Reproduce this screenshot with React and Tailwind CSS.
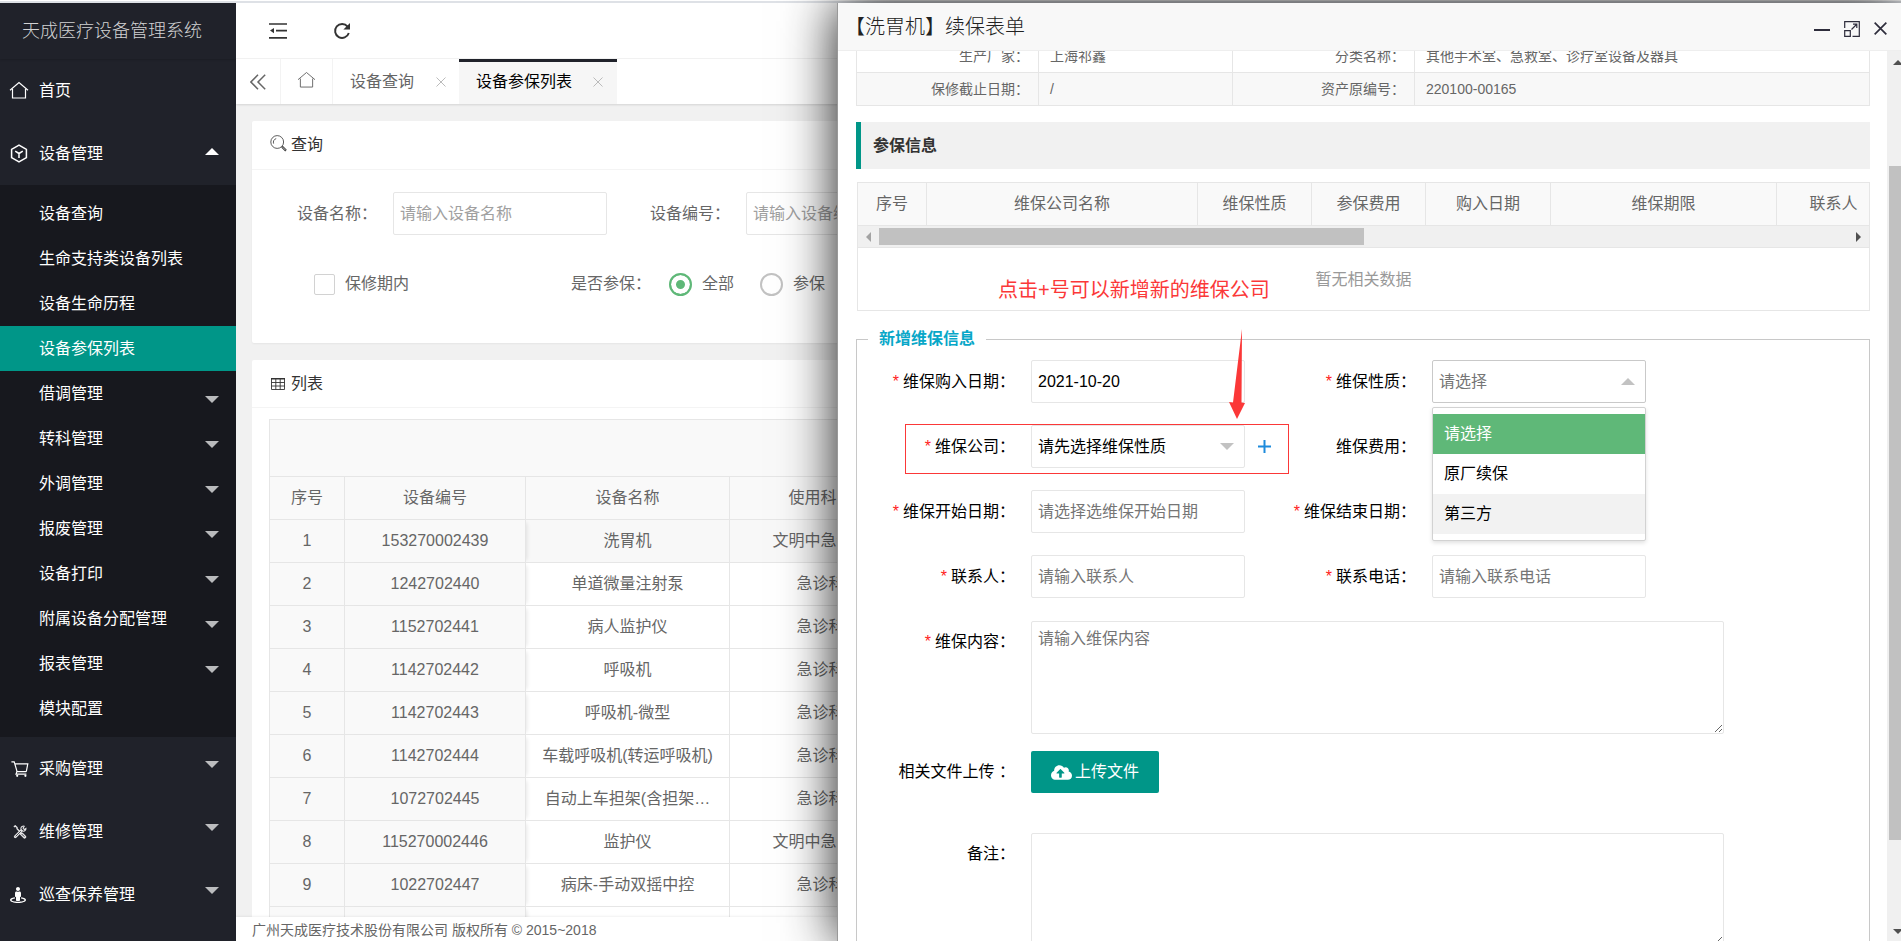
import React from "react";
import { FaStreetView, FaCloudUploadAlt } from "react-icons/fa";

/* ---------- icons ---------- */

function HomeIcon({ className, width = 1 }) {
  return (
    <svg className={className} viewBox="0 0 20 18" fill="none" stroke="currentColor" strokeWidth={width} aria-hidden="true">
      <path d="M1 9.2 10 1.6 19 9.2" />
      <path d="M3.5 8v9h13V8" />
    </svg>
  );
}

function CubeIcon({ className }) {
  return (
    <svg className={className} viewBox="0 0 18 20" fill="none" stroke="currentColor" strokeWidth="1.6" aria-hidden="true">
      <path d="M9 1.2 16.8 5.6v8.8L9 18.8 1.2 14.4V5.6Z" strokeLinejoin="round" />
      <path d="M5 7.6 9 10l4-2.4M9 10v4.8" />
    </svg>
  );
}

function CartIcon({ className }) {
  return (
    <svg className={className} viewBox="0 0 18 16" fill="none" stroke="currentColor" strokeWidth="1.2" aria-hidden="true">
      <path d="M.4.8h2.8l2.9 9.8h9.2M4.2 2.8h12.6l-1.5 7.8M5.9 10.6 5 13.2h10.4" />
      <circle cx="6.2" cy="14.8" r="1.1" fill="currentColor" stroke="none" />
      <circle cx="14.4" cy="14.8" r="1.1" fill="currentColor" stroke="none" />
    </svg>
  );
}

function ToolsIcon({ className }) {
  return (
    <svg className={className} viewBox="0 0 16 16" fill="none" stroke="currentColor" aria-hidden="true">
      <path d="M1 2.2 2.6 1l2 1.8v1.4l4 4" strokeWidth="1.6" />
      <path d="m9.8 10.2 3.4 3.4" strokeWidth="3.8" strokeLinecap="round" />
      <path d="m10 10.4 3 3" stroke="#20222a" strokeWidth="1" />
      <path d="M2.6 13.4 9.4 6.6" strokeWidth="3.2" strokeLinecap="round" />
      <path d="M3 13 9 7" stroke="#20222a" strokeWidth=".9" />
      <path d="M12.8 1.4a2.9 2.9 0 1 0 2 2.6l-1.9 1.2-1.4-1.5Z" strokeWidth="1.2" />
    </svg>
  );
}

function Caret({ up, className }) {
  return (
    <svg className={className} viewBox="0 0 14 7" fill="currentColor" aria-hidden="true">
      <path d={up ? "M0 7 7 0l7 7Z" : "M0 0h14L7 7Z"} />
    </svg>
  );
}

function ShrinkIcon({ className }) {
  return (
    <svg className={className} viewBox="0 0 18 16" aria-hidden="true">
      <path d="M0 1h18M7 7.6h11M0 14.8h18" stroke="currentColor" strokeWidth="1.7" />
      <path d="M5 5v5.2L1 7.6Z" fill="currentColor" />
    </svg>
  );
}

function RefreshIcon({ className }) {
  return (
    <svg className={className} viewBox="0 0 18 18" aria-hidden="true">
      <path d="M14.6 4.6A7 7 0 1 0 15.8 11" fill="none" stroke="currentColor" strokeWidth="1.9" />
      <path d="M17 1v6.6h-6.6Z" fill="currentColor" />
    </svg>
  );
}

function DoubleLeftIcon({ className }) {
  return (
    <svg className={className} viewBox="0 0 16 16" fill="none" stroke="currentColor" strokeWidth="1.5" aria-hidden="true">
      <path d="M8 .8.9 8 8 15.2M15.2.8 8 8l7.2 7.2" />
    </svg>
  );
}

function CrossIcon({ className, width = 1 }) {
  return (
    <svg className={className} viewBox="0 0 10 10" fill="none" stroke="currentColor" strokeWidth={width} aria-hidden="true">
      <path d="m.5.5 9 9m0-9-9 9" />
    </svg>
  );
}

function SearchIcon({ className }) {
  return (
    <svg className={className} viewBox="0 0 17 17" fill="none" stroke="currentColor" aria-hidden="true">
      <circle cx="7.2" cy="7" r="6.4" strokeWidth=".8" />
      <path d="M3.6 8.6a3.8 3.8 0 0 1 2.6-5" strokeWidth=".8" />
      <path d="m12 11.6 4 4" strokeWidth="2.2" />
      <path d="m12.6 12.2 3 3" stroke="#fff" strokeWidth=".7" />
    </svg>
  );
}

function GridIcon({ className }) {
  return (
    <svg className={className} viewBox="0 0 14 12" fill="none" stroke="currentColor" aria-hidden="true">
      <path d="M.5.5h13v11H.5ZM.5 4.5h13M.5 8h13M4.8.5v11M9.2.5v11" strokeWidth=".9" />
      <path d="M0 .8h14" strokeWidth="1.4" />
    </svg>
  );
}

function MaximizeIcon({ className }) {
  return (
    <svg className={className} viewBox="0 0 16 16" fill="none" stroke="currentColor" strokeWidth="1.2" aria-hidden="true">
      <path d="M.7 7V.7h14.6v14.6H8.5" />
      <path d="M.7 9.7h5.6v5.6H.7Z" />
      <path d="M7.5 8.5 12.5 3.5M9 3.2h3.8V7" />
    </svg>
  );
}

/* ---------- sidebar ---------- */

const deviceMenu = [
  { text: "设备查询" },
  { text: "生命支持类设备列表" },
  { text: "设备生命历程" },
  { text: "设备参保列表", active: true },
  { text: "借调管理", more: true },
  { text: "转科管理", more: true },
  { text: "外调管理", more: true },
  { text: "报废管理", more: true },
  { text: "设备打印", more: true },
  { text: "附属设备分配管理", more: true },
  { text: "报表管理", more: true },
  { text: "模块配置" },
];

function MenuItem({ icon, text, caret }) {
  return (
    <a href="#" className="flex h-[63px] items-center pr-[17px] pl-[9px]">
      <span className="flex w-[30px] items-center">{icon}</span>
      <span className="flex-1">{text}</span>
      {caret}
    </a>
  );
}

function Sidebar() {
  return (
    <aside className="w-[236px] shrink-0 overflow-hidden bg-[#20222a] text-white">
      <div className="flex h-[56px] items-center justify-center pr-3 text-[18px] font-light text-[#d2d3d4] shadow-[0_1px_2px_rgba(0,0,0,0.15)]">
        天成医疗设备管理系统
      </div>
      <nav>
        <MenuItem icon={<HomeIcon width={1.2} className="mb-[2px] h-[18px] w-5" />} text="首页" />
        <MenuItem
          icon={<CubeIcon className="ml-px h-[19px] w-[18px]" />}
          text="设备管理"
          caret={<Caret up className="mb-1 h-[7px] w-[14px]" />}
        />
        <div className="bg-[#17181e] py-[6px]">
          {deviceMenu.map((m) => (
            <a
              key={m.text}
              href="#"
              className={
                "flex h-[45px] items-center justify-between pr-[17px] pl-[39px] " + (m.active ? "bg-[#009688]" : "")
              }
            >
              {m.text}
              {m.more && <Caret className="mt-3 h-[7px] w-[14px] text-[#b9babc]" />}
            </a>
          ))}
        </div>
        <MenuItem
          icon={<CartIcon className="ml-[2px] h-4 w-[18px]" />}
          text="采购管理"
          caret={<Caret className="mb-2 h-[7px] w-[14px] text-[#bcbdbf]" />}
        />
        <MenuItem
          icon={<ToolsIcon className="ml-1 h-[14px] w-[14px] text-[#e4e4e6]" />}
          text="维修管理"
          caret={<Caret className="mb-2 h-[7px] w-[14px] text-[#bcbdbf]" />}
        />
        <MenuItem
          icon={<FaStreetView className="ml-px h-[18px] w-4" />}
          text="巡查保养管理"
          caret={<Caret className="mb-2 h-[7px] w-[14px] text-[#bcbdbf]" />}
        />
      </nav>
    </aside>
  );
}

/* ---------- main page ---------- */

const devices = [
  ["1", "153270002439", "洗胃机", "文明中急诊科"],
  ["2", "1242702440", "单道微量注射泵", "急诊科"],
  ["3", "1152702441", "病人监护仪", "急诊科"],
  ["4", "1142702442", "呼吸机", "急诊科"],
  ["5", "1142702443", "呼吸机-微型", "急诊科"],
  ["6", "1142702444", "车载呼吸机(转运呼吸机)", "急诊科"],
  ["7", "1072702445", "自动上车担架(含担架…", "急诊科"],
  ["8", "115270002446", "监护仪", "文明中急诊科"],
  ["9", "1022702447", "病床-手动双摇中控", "急诊科"],
  ["", "", "", ""],
];

const inputClass =
  "h-[43px] w-[214px] rounded-[2px] border border-[#e6e6e6] bg-white px-[6px] outline-none placeholder:opacity-100";

function TopBar() {
  return (
    <header className="bg-white">
      <div className="flex h-14 items-center gap-[46px] border-b border-[#f3f3f3] pl-[33px] text-[#333]">
        <button type="button" aria-label="收起菜单">
          <ShrinkIcon className="h-4 w-[18px]" />
        </button>
        <button type="button" aria-label="刷新">
          <RefreshIcon className="h-[18px] w-[18px]" />
        </button>
      </div>
      <div className="flex h-[45px] text-[#666] shadow-[0_1px_2px_rgba(0,0,0,0.12)]">
        <button type="button" aria-label="向左" className="flex w-[45px] items-center justify-center border-r border-[#f3f3f3]">
          <DoubleLeftIcon className="h-4 w-4" />
        </button>
        <button type="button" aria-label="首页" className="flex w-[52px] items-center justify-center border-r border-[#f3f3f3] pb-1">
          <HomeIcon className="h-[17px] w-[19px]" />
        </button>
        <div className="flex w-[126px] items-center justify-between pr-[13px] pl-[17px]">
          <a href="#">设备查询</a>
          <button type="button" aria-label="关闭设备查询">
            <CrossIcon className="h-[10px] w-[10px] text-[#bbb]" />
          </button>
        </div>
        <div className="flex w-[158px] items-center justify-between border-t-[3px] border-[#20222a] bg-[#f6f6f6] pr-[14px] pb-[3px] pl-[17px] text-black">
          <a href="#">设备参保列表</a>
          <button type="button" aria-label="关闭设备参保列表">
            <CrossIcon className="h-[10px] w-[10px] text-[#bbb]" />
          </button>
        </div>
      </div>
    </header>
  );
}

function SearchCard() {
  return (
    <section className="h-[222px] shrink-0 rounded-[2px] bg-white shadow-[0_1px_2px_rgba(0,0,0,0.05)]">
      <h2 className="flex h-[49px] items-center gap-1 border-b border-[#f4f4f4] pl-[18px] text-[#333]">
        <SearchIcon className="mb-[3px] h-[17px] w-[17px]" />
        查询
      </h2>
      <form>
        <div className="mt-[22px] flex items-center text-[#666]">
          <label htmlFor="q-name" className="w-[141px] pr-4 text-right">设备名称：</label>
          <input id="q-name" placeholder="请输入设备名称" className={inputClass + " placeholder:text-[#a0a0a0]"} />
          <label htmlFor="q-code" className="w-[139px] pr-4 text-right">设备编号：</label>
          <input id="q-code" placeholder="请输入设备编号" className={inputClass + " placeholder:text-[#a0a0a0]"} />
        </div>
        <div className="mt-[37px] flex h-6 items-center text-[#666]">
          <label className="ml-[62px] flex w-[257px] items-center gap-[10px]">
            <input type="checkbox" className="h-[21px] w-[21px] appearance-none rounded-[2px] border border-[#d2d2d2] bg-white" />
            保修期内
          </label>
          <span className="w-[98px]">是否参保：</span>
          <label className="flex w-[91px] items-center gap-[10px]">
            <input
              type="radio"
              name="insured"
              defaultChecked
              className="h-[23px] w-[23px] appearance-none rounded-full border-2 border-[#5fb878] bg-[#5fb878] shadow-[inset_0_0_0_5px_#fff]"
            />
            全部
          </label>
          <label className="flex items-center gap-[10px]">
            <input type="radio" name="insured" className="h-[23px] w-[23px] appearance-none rounded-full border-2 border-[#c2c2c2] bg-white" />
            参保
          </label>
        </div>
      </form>
    </section>
  );
}

function ListCard() {
  return (
    <section className="min-h-0 flex-1 overflow-hidden rounded-t-[2px] bg-white">
      <h2 className="flex h-12 items-center gap-[6px] border-b border-[#f4f4f4] pl-[19px] text-[#333]">
        <GridIcon className="h-3 w-[14px]" />
        列表
      </h2>
      <div className="mt-[11px] ml-[17px] border-t border-l border-[#e6e6e6]">
        <div className="h-[57px] border-b border-[#e6e6e6] bg-[#f9f9f9]" />
        <table className="w-[1400px] table-fixed border-separate border-spacing-0 text-center text-[#666]">
          <colgroup>
            <col className="w-[75px]" />
            <col className="w-[181px]" />
            <col className="w-[204px]" />
            <col className="w-[182px]" />
            <col />
          </colgroup>
          <thead>
            <tr className="h-[43px] bg-[#f9f9f9]">
              {["序号", "设备编号", "设备名称", "使用科室", ""].map((h, i) => (
                <th key={i} className="border-r border-b border-[#e6e6e6] font-normal">{h}</th>
              ))}
            </tr>
          </thead>
          <tbody>
            {devices.map((d, r) => (
              <tr key={r} className={"h-[43px] " + (r === 0 ? "bg-[#f8f8f8]" : "")}>
                <td className="border-r border-b border-[#e6e6e6] bg-[#f9f9f9]">{d[0]}</td>
                <td className="border-r border-b border-[#e6e6e6] bg-[#f9f9f9] shadow-[4px_0_4px_-3px_rgba(0,0,0,0.1)]">{d[1]}</td>
                <td className="border-r border-b border-[#e6e6e6]">{d[2]}</td>
                <td className="border-r border-b border-[#e6e6e6]">{d[3]}</td>
                <td className="border-b border-[#e6e6e6]" />
              </tr>
            ))}
          </tbody>
        </table>
      </div>
    </section>
  );
}

/* ---------- renewal drawer ---------- */

const cellLabel = "border-r border-b border-[#e6e6e6] pr-[9px] text-right font-normal";
const cellValue = "border-r border-b border-[#e6e6e6] pl-[11px]";

function InfoTable() {
  return (
    <table className="-mt-3 w-full table-fixed border-separate border-spacing-0 border-l border-[#e6e6e6] text-[14px] text-[#666]">
      <colgroup>
        <col className="w-[182px]" />
        <col className="w-[194px]" />
        <col className="w-[182px]" />
        <col />
      </colgroup>
      <tbody>
        <tr className="h-[34px]">
          <th className={cellLabel}>生产厂家：</th>
          <td className={cellValue}>上海祁鑫</td>
          <th className={cellLabel}>分类名称：</th>
          <td className={cellValue}>其他手术室、急救室、诊疗室设备及器具</td>
        </tr>
        <tr className="h-[33px] bg-[#f8f8f8]">
          <th className={cellLabel}>保修截止日期：</th>
          <td className={cellValue}>/</td>
          <th className={cellLabel}>资产原编号：</th>
          <td className={cellValue}>220100-00165</td>
        </tr>
      </tbody>
    </table>
  );
}

function InsuredTable() {
  return (
    <div className="mt-[13px] ml-px overflow-hidden border border-[#e6e6e6] text-[#666]">
      <table className="w-[1033px] table-fixed border-separate border-spacing-0">
        <colgroup>
          <col className="w-[69px]" />
          <col className="w-[271px]" />
          <col className="w-[114px]" />
          <col className="w-[114px]" />
          <col className="w-[125px]" />
          <col className="w-[226px]" />
          <col className="w-[114px]" />
        </colgroup>
        <thead>
          <tr className="h-[43px] bg-[#f9f9f9]">
            {["序号", "维保公司名称", "维保性质", "参保费用", "购入日期", "维保期限", "联系人"].map((h) => (
              <th key={h} className="border-r border-b border-[#e6e6e6] font-normal">{h}</th>
            ))}
          </tr>
        </thead>
      </table>
      <div className="flex h-[22px] items-center gap-2 border-b border-[#e6e6e6] bg-[#f0f0f0] px-2">
        <svg className="h-[10px] w-[5px] text-[#a3a3a3]" viewBox="0 0 5 10" fill="currentColor" aria-hidden="true">
          <path d="M5 0v10L0 5Z" />
        </svg>
        <div className="flex-1">
          <div className="h-[17px] w-1/2 bg-[#c1c1c1]" />
        </div>
        <svg className="h-[10px] w-[5px] text-[#505050]" viewBox="0 0 5 10" fill="currentColor" aria-hidden="true">
          <path d="M0 0v10l5-5Z" />
        </svg>
      </div>
      <p className="flex h-[62px] items-center justify-center pt-[2px] text-[#999]">暂无相关数据</p>
    </div>
  );
}

function Field({ id, label, required, children, top }) {
  return (
    <div className={"flex " + (top ? "items-start" : "items-center")}>
      <label
        htmlFor={id}
        className={"flex w-[174px] shrink-0 justify-end gap-1 pr-4 whitespace-pre text-black " + (top ? "pt-[9px]" : "")}
      >
        {required && <span className="text-[#ff2020]">*</span>}
        {label}
      </label>
      {children}
    </div>
  );
}

function RenewForm() {
  const input = inputClass + " text-black placeholder:text-[#757575]";
  const area =
    "block h-[113px] w-[693px] resize rounded-[2px] border border-[#e6e6e6] bg-white px-[6px] py-[5px] outline-none placeholder:text-[#757575]";
  return (
    <fieldset className="relative mt-4 border border-[#c8c8c8] pb-10">
      <legend className="ml-[11px] px-[11px] font-bold text-[#08a7c8]">新增维保信息</legend>
      <div className="mt-[9px] grid grid-cols-[401px_1fr] gap-y-[22px]">
        <Field id="buy" label="维保购入日期：" required>
          <input id="buy" defaultValue="2021-10-20" className={input} />
        </Field>
        <Field id="kind" label="维保性质：" required>
          <div className="relative">
            <select id="kind" className="h-[43px] w-[214px] appearance-none rounded-[2px] border border-[#c9c9c9] bg-white px-[6px] text-[#757575] outline-none">
              <option>请选择</option>
            </select>
            <Caret up className="pointer-events-none absolute top-[18px] right-[11px] h-[7px] w-[14px] text-[#c2c2c2]" />
            <ul role="listbox" aria-label="维保性质" className="absolute top-[47px] left-0 z-10 w-full rounded-[2px] border border-[#d2d2d2] bg-white py-[6px] text-black shadow-[0_2px_4px_rgba(0,0,0,0.12)]">
              <li role="option" aria-selected="true" className="flex h-10 items-center bg-[#5fb878] pl-[11px] text-white">请选择</li>
              <li role="option" aria-selected="false" className="flex h-10 items-center pl-[11px]">原厂续保</li>
              <li role="option" aria-selected="false" className="flex h-10 items-center bg-[#f2f2f2] pl-[11px]">第三方</li>
            </ul>
          </div>
        </Field>
        <Field id="company" label="维保公司：" required>
          <div className="relative">
            <select id="company" className="h-[43px] w-[214px] appearance-none rounded-[2px] border border-[#e6e6e6] bg-white px-[6px] text-black outline-none">
              <option>请先选择维保性质</option>
            </select>
            <Caret className="pointer-events-none absolute top-[18px] right-[11px] h-[7px] w-[14px] text-[#c2c2c2]" />
          </div>
          <button type="button" aria-label="新增维保公司" className="ml-[13px] shrink-0 text-[#1e8bdc]">
            <svg className="h-[13px] w-[13px]" viewBox="0 0 13 13" stroke="currentColor" strokeWidth="2" aria-hidden="true">
              <path d="M6.5 0v13M0 6.5h13" />
            </svg>
          </button>
        </Field>
        <Field id="cost" label="维保费用：">
          <input id="cost" className={input} />
        </Field>
        <Field id="start" label="维保开始日期：" required>
          <input id="start" placeholder="请选择选维保开始日期" className={input} />
        </Field>
        <Field id="end" label="维保结束日期：" required>
          <input id="end" className={input} />
        </Field>
        <Field id="person" label="联系人：" required>
          <input id="person" placeholder="请输入联系人" className={input} />
        </Field>
        <Field id="phone" label="联系电话：" required>
          <input id="phone" placeholder="请输入联系电话" className={input} />
        </Field>
      </div>
      <div className="mt-[23px]">
        <Field id="content" label="维保内容：" required top>
          <textarea id="content" placeholder="请输入维保内容" className={area} />
        </Field>
      </div>
      <div className="mt-[17px]">
        <Field id="upload" label="相关文件上传 ：">
          <button id="upload" type="button" className="flex h-[42px] w-32 items-center justify-center gap-[3px] rounded-[2px] bg-[#009688] text-white">
            <FaCloudUploadAlt className="h-[17px] w-[21px]" />
            上传文件
          </button>
        </Field>
      </div>
      <div className="mt-10">
        <Field id="remark" label="备注：" top>
          <textarea id="remark" className={area} />
        </Field>
      </div>

      {/* guide marks laid over the form */}
      <div className="pointer-events-none absolute top-[73px] left-[48px] h-[50px] w-[384px] border border-[#fb3838]" />
      <svg className="pointer-events-none absolute -top-[22px] left-[372px] h-[90px] w-4" viewBox="0 0 16 90" fill="#fb3838" aria-hidden="true">
        <path d="M13 0 12.5 73.5 16 74 8 90 0 73 4 73.5Z" />
      </svg>
      <p className="pointer-events-none absolute -top-[75px] left-[141px] text-[20px] leading-[28px] whitespace-nowrap text-[#fb3838]">
        点击+号可以新增新的维保公司
      </p>
    </fieldset>
  );
}

function Drawer() {
  return (
    <div
      role="dialog"
      aria-label="续保表单"
      className="absolute inset-y-0 right-0 z-20 flex w-[1064px] flex-col border-l border-[#999] bg-white shadow-[0_0_50px_rgba(0,0,0,0.9)]"
    >
      <div className="flex h-12 shrink-0 items-center border-b border-[#eee] bg-[#f8f8f8] pt-[10px] pr-[14px] pb-[10px] pl-[7px]">
        <h1 className="flex-1 text-[20px] leading-[28px] font-light text-[#222]">【洗胃机】续保表单</h1>
        <div className="flex items-center gap-[14px] pt-1 text-[#2e2d3c]">
          <button type="button" aria-label="最小化">
            <svg className="h-4 w-4" viewBox="0 0 16 16" aria-hidden="true">
              <path d="M0 9h16" stroke="currentColor" strokeWidth="2" />
            </svg>
          </button>
          <button type="button" aria-label="最大化">
            <MaximizeIcon className="h-4 w-4" />
          </button>
          <button type="button" aria-label="关闭">
            <CrossIcon className="h-[13px] w-[13px]" width={1.3} />
          </button>
        </div>
      </div>
      <div className="flex min-h-0 flex-1">
        <div className="min-w-0 flex-1 overflow-hidden pr-[17px] pl-[18px]">
          <InfoTable />
          <h2 className="mt-4 flex h-[47px] items-center border-l-[5px] border-[#009688] bg-[#f1f1f1] pl-3 font-bold text-[#333]">
            参保信息
          </h2>
          <InsuredTable />
          <RenewForm />
        </div>
        <div className="flex w-[14px] shrink-0 flex-col items-end bg-[#f0f0f0] text-[#505050]">
          <svg className="mt-[9px] h-[5px] w-2" viewBox="0 0 8 5" fill="currentColor" aria-hidden="true">
            <path d="M0 5 5 0l3 3v2Z" />
          </svg>
          <div className="mt-[101px] h-[674px] w-3 bg-[#c1c1c1]" />
          <svg className="mt-auto mb-[7px] h-[5px] w-2" viewBox="0 0 8 5" fill="currentColor" aria-hidden="true">
            <path d="M0 0h8v2L5 5Z" />
          </svg>
        </div>
      </div>
    </div>
  );
}

export default function App() {
  return (
    <div
      lang="zh-CN"
      className="flex h-screen flex-col overflow-hidden bg-white font-['Liberation_Sans','Noto_Sans_CJK_SC',sans-serif] text-[16px] leading-[24px] font-normal"
    >
      <div className="mt-px h-[2px] shrink-0 bg-[#dee1e6]" />
      <div className="relative flex min-h-0 flex-1">
        <Sidebar />
        <div className="flex min-w-0 flex-1 flex-col bg-[#f1f1f1]">
          <TopBar />
          <main className="flex min-h-0 flex-1 flex-col gap-[17px] overflow-hidden px-4 pt-[17px]">
            <SearchCard />
            <ListCard />
          </main>
          <footer className="h-6 shrink-0 bg-white px-4 text-[14px] leading-[26px] text-[#666] shadow-[0_-1px_2px_rgba(0,0,0,0.06)]">
            广州天成医疗技术股份有限公司 版权所有 © 2015~2018
          </footer>
        </div>
        <Drawer />
      </div>
    </div>
  );
}
